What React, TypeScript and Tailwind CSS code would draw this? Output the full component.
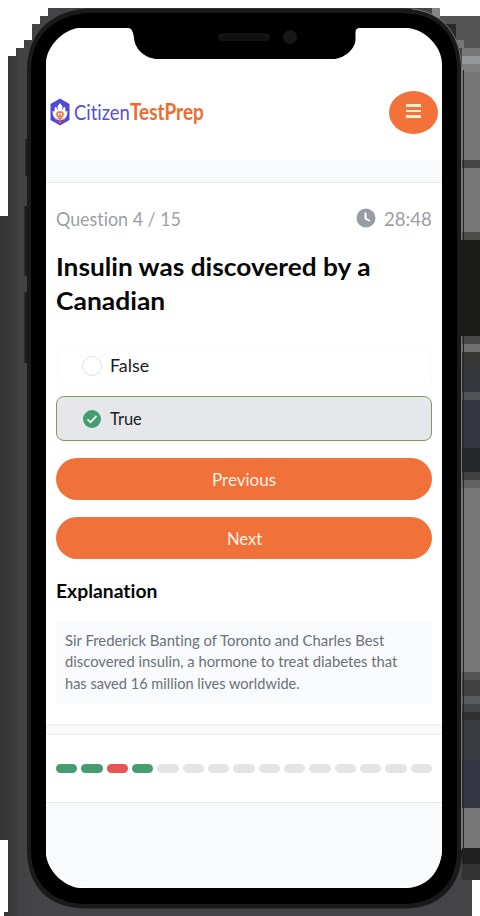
import React from "react";

const bands: [number, number, string][] = [
  [16, 32, "#555555"], [48, 8, "#777777"], [56, 8, "#96979b"], [64, 8, "#808080"],
  [72, 88, "#767676"], [160, 8, "#444444"], [168, 64, "#777777"], [232, 8, "#4c4c4a"],
  [240, 96, "#1a1a19"], [336, 8, "#484848"], [344, 8, "#707070"], [352, 16, "#363634"],
  [368, 24, "#36373c"], [392, 8, "#515255"], [400, 48, "#34373f"], [448, 24, "#25272b"],
  [472, 8, "#414141"], [480, 8, "#636363"], [488, 184, "#777777"], [672, 8, "#555555"],
  [680, 16, "#414141"], [696, 8, "#595d60"], [704, 8, "#434445"], [712, 8, "#303030"],
  [720, 40, "#3a3c41"], [760, 48, "#343743"], [808, 40, "#777777"], [848, 16, "#202020"],
  [864, 16, "#333333"],
];

function Device() {
  return (
    <svg className="absolute inset-0" width="480" height="916" viewBox="0 0 480 916" aria-hidden="true">
      <defs>
        <linearGradient id="side" x1="0" x2="32" y1="0" y2="0" gradientUnits="userSpaceOnUse">
          <stop offset="0" stopColor="#353535" />
          <stop offset="0.38" stopColor="#393939" />
          <stop offset="0.65" stopColor="#424244" />
          <stop offset="1" stopColor="#444446" />
        </linearGradient>
      </defs>
      <path
        fill="url(#side)"
        shapeRendering="crispEdges"
        d="M48 8H440V16H472V916H4V912H8V840H0V216H8V56H16V48H24V40H32V24H40V16H48Z"
      />
      <g shapeRendering="crispEdges">
        {bands.map(([y, h, c]) => (
          <rect key={y} x={y === 16 ? 440 : 462} y={y} width={y === 16 ? 40 : 18} height={h} fill={c} />
        ))}
        <rect x="440" y="8" width="40" height="8" fill="#fff" />
        <rect x="432" y="8" width="8" height="10" fill="#858585" />
        <rect x="440" y="24" width="16" height="24" fill="#292929" />
        <rect x="456" y="40" width="8" height="8" fill="#777" />
      </g>
      <path d="M25.500 139h3v37h-3zM24.500 206h4v70h-4zM24.500 292h4v71h-4z" fill="#1b1b1d" />
      <path
        fill="#1a1a1a"
        d="M92 8.500H401C440 8.500 462 32 462 70V850C462 886 440 908.500 404 908.500H86C50 908.500 27 888 27 850V70C27 32 53 8.500 92 8.500Z"
      />
      <path d="M412 9C442 12 461.500 34 461.500 70V850" fill="none" stroke="#777" strokeWidth="1" />
      <path d="M463.500 70V855" stroke="#252525" strokeWidth="1" />
      <path
        d="M92 13H400C438 13 457 34 457 70V850C457 884 436 904 403 904H86C53 904 31 884 31 850V70C31 35 56 13 92 13Z"
        fill="#000"
      />
      <rect x="458" y="240" width="22" height="96" fill="#1a1a19" />
      <path
        fill="#fff"
        d="M78 28H128C132 28 133.500 33 134 38C135 50 146 59 158 59H333C344 59 355 49 355.500 40V32Q355.500 28 360 28H408C426 30 442 47 442 64V852C440 872 427 887 407 888H80C64 887 47 870 46 854V62C47 46 63 30 78 28Z"
      />
      <rect x="218" y="33" width="52" height="8" rx="4" fill="#111" />
      <circle cx="290" cy="37" r="7" fill="#17171a" />
    </svg>
  );
}

function LeafMark() {
  return (
    <svg className="mt-px" width="20" height="28" viewBox="0 0 20 28" aria-hidden="true">
      <path d="M10 .5 19.500 6v16L10 27.500.5 22V6Z" fill="#5048db" />
      <path
        d="m10 5 2.400 3.200v4.300l1.600-4 1.400 1.500v3.500l2-.5-.4 4.500-2.500 3.500-4.500 1.500-4.500-1.500L3 17.500 2.600 13l2 .5V10L6 8.500l1.600 4V8.200Z"
        fill="#fff"
      />
      <rect x="7" y="14" width="6" height="4.600" rx="2" fill="none" stroke="#ec713a" strokeWidth="1.500" />
      <path d="M10 14v10M7.500 20.500h5" stroke="#ec713a" strokeWidth="1.300" />
      <path d="M7.500 23.500h5L10 26Z" fill="#cb5570" />
    </svg>
  );
}

function Line({ text, width, className }: { text: string; width: number; className: string }) {
  const ref = React.useRef<HTMLSpanElement>(null);
  const [scale, setScale] = React.useState(1);
  React.useLayoutEffect(() => {
    if (ref.current) setScale(width / ref.current.offsetWidth);
  }, [width]);
  return (
    <span className="block" style={{ width }}>
      <span
        ref={ref}
        className={`inline-block origin-left whitespace-nowrap ${className}`}
        style={{ transform: `scaleX(${scale})` }}
      >
        {text}
      </span>
    </span>
  );
}

const progress = ["ok", "ok", "bad", "ok", ...Array(11).fill("todo")];

export default function App() {
  return (
    <div className="relative h-[916px] w-[480px] overflow-hidden bg-white font-['Lato',sans-serif] [font-variant-ligatures:none]">
      <Device />
      <main className="relative ml-[46px] flex w-[396px] flex-col pt-[61px]">
        <header className="flex h-[99px] items-center justify-between pl-1 pr-[4px]">
          <div className="mt-[2px] flex items-center">
            <LeafMark />
            <div className="ml-[4px] flex text-[22px] leading-[28px]">
              <Line text="Citizen" width={56} className="text-[#5550d5]" />
              <Line text="TestPrep" width={74} className="font-bold text-[#ed6b2f]" />
            </div>
          </div>
          <button className="mt-[3px] flex h-[43px] w-[49px] items-center justify-center rounded-[50%] bg-[#f2723a]" aria-label="Menu">
            <span className="mb-[2px] flex flex-col gap-[3px]">
              <span className="block h-[2.500px] w-[15px] bg-[#ffedcf]" />
              <span className="block h-[2.500px] w-[15px] bg-[#ffedcf]" />
              <span className="block h-[2.500px] w-[15px] bg-[#ffedcf]" />
            </span>
          </button>
        </header>
        <div className="h-[23px] border-b border-[#e5e8ea] bg-[#f9fafc]" />

        <section className="flex h-[541px] flex-col px-[10px]">
          <div className="mt-[23px] flex h-[26px] items-center justify-between text-[19px] text-[#9b9fa4]">
            <Line text="Question 4 / 15" width={125} className="leading-[26px]" />
            <div className="flex items-center">
              <svg className="mb-[3px] mr-[8px]" width="20" height="20" viewBox="0 0 20 20">
                <circle cx="10" cy="10" r="9.500" fill="#989da5" />
                <path d="M9.500 4.500v6l4.300 2.500" stroke="#fff" strokeWidth="2" fill="none" />
              </svg>
              <Line text="28:48" width={48} className="leading-[26px]" />
            </div>
          </div>
          <h1 className="mt-[18px] text-[24px] font-bold leading-[34px] text-[#080808]">
            <Line text="Insulin was discovered by a" width={315} className="" />
            <Line text="Canadian" width={109} className="" />
          </h1>
          <div className="mt-[26px] flex h-[44px] items-center rounded-lg border border-[#fcfcfc] pl-[25px] text-[17px] text-[#1c1c1c]">
            <span className="mr-[8px] h-[20px] w-[20px] rounded-full border border-[#dedfe1]" />
            <Line text="False" width={39} className="" />
          </div>
          <div className="mt-[8px] flex h-[45px] items-center rounded-lg border border-[#7c9c5d] bg-[#e5e7eb] pl-[26px] text-[17px] text-[#1c1c1c]">
            <svg className="mr-[9px]" width="18" height="18" viewBox="0 0 18 18">
              <circle cx="9" cy="9" r="9" fill="#449d70" />
              <path d="m4.500 9.300 3 3 6-6.400" fill="none" stroke="#fff" strokeWidth="1.700" />
            </svg>
            <Line text="True" width={32} className="" />
          </div>
          <button className="mt-[17px] flex h-[42px] shrink-0 items-center justify-center rounded-full bg-[#f07139] pt-px text-[17px] text-[#fff1e4]">
            <Line text="Previous" width={64} className="" />
          </button>
          <button className="mt-[17px] flex h-[42px] shrink-0 items-center justify-center rounded-full bg-[#f07139] pt-px text-[17px] text-[#fff1e4]">
            <Line text="Next" width={35} className="" />
          </button>
          <h2 className="mt-[20px] text-[18px] font-bold leading-[25px] text-[#080808]">
            <Line text="Explanation" width={102} className="" />
          </h2>
          <div className="mt-[17px] h-[82px] bg-[#f9fafc] pl-[9px] pt-[9px] text-[15px] leading-[21.300px] text-[#6b7179]">
            <Line text="Sir Frederick Banting of Toronto and Charles Best" width={319} className="" />
            <Line text="discovered insulin, a hormone to treat diabetes that" width={332} className="" />
            <Line text="has saved 16 million lives worldwide." width={235} className="" />
          </div>
        </section>

        <div className="h-[11px] border-y-2 border-[#f0f2f4] bg-[#fafbfc]" />
        <section className="flex h-[68px] items-center gap-[4px] border-b border-[#e5e7e9] px-[10px]">
          {progress.map((state, i) => (
            <span
              key={i}
              className={`h-[9px] flex-1 rounded-full ${
                state === "ok" ? "bg-[#469c70]" : state === "bad" ? "bg-[#e85355]" : "bg-[#e5e5e6]"
              }`}
            />
          ))}
        </section>
        <div className="h-[84px] rounded-b-[38px] bg-[#f9fafc]" />
      </main>
    </div>
  );
}
